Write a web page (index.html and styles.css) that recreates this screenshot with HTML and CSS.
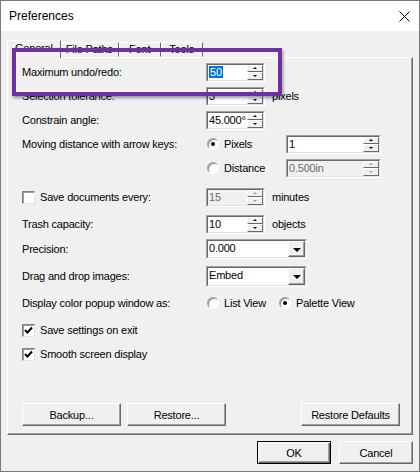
FILE: index.html
```html
<!DOCTYPE html>
<html lang="en">
<head>
    <meta charset="UTF-8">
    <meta name="viewport" content="width=device-width, initial-scale=1.0">
    <title>Preferences</title>
    <link rel="stylesheet" href="styles.css">
</head>
<body>
<div class="window">
    <!-- barra de titulo -->
    <div class="titlebar">
        <span class="title">Preferences</span>
        <svg class="close" width="11" height="11" viewBox="0 0 11 11">
            <path d="M0.5 0.5 L10.5 10.5 M10.5 0.5 L0.5 10.5" stroke="#000" stroke-width="1" fill="none"/>
        </svg>
    </div>

    <div class="client">
        <!-- pestañas -->
        <div class="tabs">
            <div class="tab active">General</div>
            <div class="tab">File Paths</div>
            <div class="tab">Font</div>
            <div class="tab">Tools</div>
        </div>

        <div class="panel">
            <div class="row">
                <span class="lbl">Maximum undo/redo:</span>
                <div class="spin"><div class="spin-in"><span class="val"><span class="sel">50</span></span><span class="arrows"><span class="up"></span><span class="down"></span></span></div></div>
            </div>
            <div class="row">
                <span class="lbl">Selection tolerance:</span>
                <div class="spin"><div class="spin-in"><span class="val">3</span><span class="arrows"><span class="up"></span><span class="down"></span></span></div></div>
                <span class="unit">pixels</span>
            </div>
            <div class="row">
                <span class="lbl">Constrain angle:</span>
                <div class="spin"><div class="spin-in"><span class="val">45.000°</span><span class="arrows"><span class="up"></span><span class="down"></span></span></div></div>
            </div>
            <div class="row">
                <span class="lbl">Moving distance with arrow keys:</span>
                <span class="opt"><span class="radio on"></span>Pixels</span>
                <div class="spin wide"><div class="spin-in"><span class="val">1</span><span class="arrows"><span class="up"></span><span class="down"></span></span></div></div>
            </div>
            <div class="row">
                <span class="lbl"></span>
                <span class="opt"><span class="radio"></span>Distance</span>
                <div class="spin wide disabled"><div class="spin-in"><span class="val">0.500in</span><span class="arrows"><span class="up"></span><span class="down"></span></span></div></div>
            </div>
            <div class="row mt5">
                <span class="lbl"><span class="check"></span>Save documents every:</span>
                <div class="spin disabled"><div class="spin-in"><span class="val">15</span><span class="arrows"><span class="up"></span><span class="down"></span></span></div></div>
                <span class="unit">minutes</span>
            </div>
            <div class="row mt3">
                <span class="lbl">Trash capacity:</span>
                <div class="spin"><div class="spin-in"><span class="val">10</span><span class="arrows"><span class="up"></span><span class="down"></span></span></div></div>
                <span class="unit">objects</span>
            </div>
            <div class="row mt1">
                <span class="lbl">Precision:</span>
                <div class="combo"><div class="combo-in"><span class="val">0.000</span><span class="combo-btn"></span></div></div>
            </div>
            <div class="row mt3">
                <span class="lbl">Drag and drop images:</span>
                <div class="combo tall"><div class="combo-in"><span class="val">Embed</span><span class="combo-btn"></span></div></div>
            </div>
            <div class="row mt3">
                <span class="lbl">Display color popup window as:</span>
                <span class="opt short"><span class="radio"></span>List View</span>
                <span class="opt"><span class="radio on"></span>Palette View</span>
            </div>
            <div class="row mt3">
                <span class="lbl wide-lbl"><span class="check on"><svg width="9" height="9" viewBox="0 0 9 9"><path d="M1 4 L3.5 6.5 L8 1.5" stroke="#000" stroke-width="2" fill="none"/></svg></span>Save settings on exit</span>
            </div>
            <div class="row">
                <span class="lbl wide-lbl"><span class="check on"><svg width="9" height="9" viewBox="0 0 9 9"><path d="M1 4 L3.5 6.5 L8 1.5" stroke="#000" stroke-width="2" fill="none"/></svg></span>Smooth screen display</span>
            </div>

            <div class="panel-buttons">
                <button class="btn">Backup...</button>
                <button class="btn">Restore...</button>
                <button class="btn right">Restore Defaults</button>
            </div>
        </div>

        <div class="actions">
            <button class="btn default">OK</button>
            <button class="btn">Cancel</button>
        </div>
    </div>

    <!-- marco morado de anotacion -->
    <div class="highlight"></div>
</div>
</body>
</html>
```

FILE: styles.css
```css
* {
    box-sizing: border-box;
}

body {
    margin: 0;
    font-family: "Liberation Sans", Arial, sans-serif;
    font-size: 11px;
    letter-spacing: -0.2px;
    color: #000;
    background: #fff;
}

.window {
    position: relative;
    width: 420px;
    height: 472px;
    border: 1px solid #7a7a7a;
    background: #f0f0f0;
    display: flex;
    flex-direction: column;
}

.titlebar {
    height: 30px;
    background: #fff;
    display: flex;
    align-items: center;
    justify-content: space-between;
    padding: 0 9px 0 8px;
}

.title {
    font-size: 12px;
    letter-spacing: 0;
}

.client {
    flex: 1;
    display: flex;
    flex-direction: column;
    padding: 9px 6px 0 6px;
}

/* pestañas */
.tabs {
    display: flex;
    align-items: flex-end;
    height: 17px;
    padding-left: 2px;
    position: relative;
    z-index: 1;
}

.tab {
    height: 15px;
    min-width: 42px;
    padding: 0 5px;
    line-height: 13px;
    text-align: center;
    border: 1px solid;
    border-color: #fff #696969 transparent #fff;
    background: #f0f0f0;
}

.tab.active {
    height: 18px;
    margin: 0 -1px -1px -2px;
    padding: 0 7px;
    line-height: 15px;
    border-bottom: none;
    position: relative;
    z-index: 2;
}

.panel {
    height: 378px;
    border: 1px solid;
    border-color: #fff #696969 #696969 #fff;
    box-shadow: inset -1px -1px #a0a0a0;
    padding: 2px 12px 8px 14px;
    display: flex;
    flex-direction: column;
}

.row {
    display: flex;
    align-items: center;
    height: 24px;
}

.mt1 { margin-top: 1px; }
.mt3 { margin-top: 3px; }
.mt5 { margin-top: 5px; }

.lbl {
    width: 184px;
    flex: none;
    display: flex;
    align-items: center;
}

.wide-lbl {
    width: auto;
}

.unit {
    margin-left: 7px;
}

/* campo con flechas */
.spin,
.combo {
    width: 59px;
    height: 19px;
    border: 1px solid;
    border-color: #a0a0a0 #fff #fff #a0a0a0;
}

.spin.wide {
    width: 95px;
}

.spin-in,
.combo-in {
    display: flex;
    height: 100%;
    border: 1px solid;
    border-color: #696969 #e3e3e3 #e3e3e3 #696969;
    background: #fff;
}

.val {
    flex: 1;
    padding-left: 1px;
    line-height: 15px;
    white-space: nowrap;
    overflow: hidden;
}

.sel {
    background: #0078d7;
    color: #fff;
    padding: 0 1px;
}

.arrows {
    width: 16px;
    display: flex;
    flex-direction: column;
}

.arrows span {
    flex: 1;
    background: #f0f0f0;
    border: 1px solid;
    border-color: #fff #696969 #696969 #fff;
    display: flex;
    align-items: center;
    justify-content: center;
}

.arrows .up::after {
    content: "";
    border-left: 2px solid transparent;
    border-right: 2px solid transparent;
    border-bottom: 2px solid #000;
}

.arrows .down::after {
    content: "";
    border-left: 2px solid transparent;
    border-right: 2px solid transparent;
    border-top: 2px solid #000;
}

.disabled .spin-in {
    background: #f0f0f0;
}

.disabled .val {
    color: #6d6d6d;
}

.disabled .arrows .up::after {
    border-bottom-color: #a0a0a0;
}

.disabled .arrows .down::after {
    border-top-color: #a0a0a0;
}

/* lista desplegable */
.combo {
    width: 101px;
    height: 20px;
}

.combo.tall {
    height: 21px;
}

.combo-btn {
    width: 17px;
    background: #f0f0f0;
    border: 1px solid;
    border-color: #fff #696969 #696969 #fff;
    box-shadow: inset -1px -1px #a0a0a0;
    display: flex;
    align-items: center;
    justify-content: center;
}

.combo-btn::after {
    content: "";
    border-left: 4px solid transparent;
    border-right: 4px solid transparent;
    border-top: 4px solid #000;
    margin-top: 1px;
}

/* radio y casilla */
.opt {
    width: 80px;
    display: flex;
    align-items: center;
    padding-left: 1px;
}

.opt.short {
    width: 72px;
}

.radio {
    width: 12px;
    height: 12px;
    margin-right: 5px;
    border-radius: 50%;
    border: 1px solid;
    border-color: #a0a0a0 #fff #fff #a0a0a0;
    box-shadow: inset 1px 1px #8a8a8a;
    background: #fff;
    display: flex;
    align-items: center;
    justify-content: center;
}

.radio.on::after {
    content: "";
    width: 4px;
    height: 4px;
    border-radius: 50%;
    background: #000;
}

.check {
    width: 13px;
    height: 13px;
    margin-right: 5px;
    border: 1px solid;
    border-color: #808080 #e3e3e3 #e3e3e3 #808080;
    box-shadow: inset 1px 1px #a0a0a0;
    background: #fff;
    display: flex;
    align-items: center;
    justify-content: center;
}

/* botones */
.btn {
    height: 23px;
    width: 99px;
    padding: 0;
    font-family: "Liberation Sans", Arial, sans-serif;
    font-size: 11px;
    letter-spacing: -0.2px;
    color: #000;
    background: #f0f0f0;
    border: 1px solid;
    border-color: #fff #696969 #696969 #fff;
    box-shadow: inset -1px -1px #a0a0a0;
}

.panel-buttons {
    margin-top: auto;
    display: flex;
    gap: 6px;
}

.panel-buttons .right {
    margin-left: auto;
}

.actions {
    display: flex;
    justify-content: flex-end;
    gap: 8px;
    margin-top: 6px;
}

.actions .btn {
    width: 74px;
}

.btn.default {
    border-color: #000;
    box-shadow: inset 1px 1px #fff, inset -1px -1px #696969, inset -2px -2px #a0a0a0;
}

.highlight {
    position: absolute;
    left: 11px;
    top: 47px;
    width: 270px;
    height: 48px;
    border: 4px solid #7030a0;
    box-shadow: 1px 2px 3px rgba(0, 0, 0, 0.4);
    z-index: 5;
}
```
